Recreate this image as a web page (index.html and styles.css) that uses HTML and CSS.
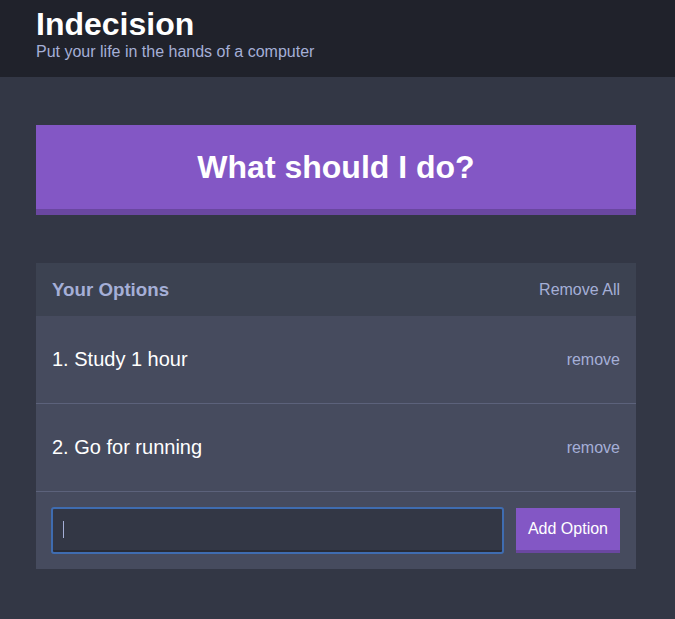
FILE: index.html
```html
<!DOCTYPE html>
<html>
<head>
<meta charset="utf-8">
<title>Indecision</title>
<link rel="stylesheet" href="styles.css">
</head>
<body>
<header class="header">
  <div class="container">
    <h1 class="header__title">Indecision</h1>
    <h2 class="header__subtitle">Put your life in the hands of a computer</h2>
  </div>
</header>
<main class="container">
  <button class="big-button">What should I do?</button>
  <section class="widget">
    <div class="widget-header">
      <h3 class="widget-header__title">Your Options</h3>
      <button class="button--link">Remove All</button>
    </div>
    <div class="option">
      <p class="option__text">1. Study 1 hour</p>
      <button class="button--link">remove</button>
    </div>
    <div class="option">
      <p class="option__text">2. Go for running</p>
      <button class="button--link">remove</button>
    </div>
    <form class="add-option">
      <div class="add-option__field">
        <input class="add-option__input" type="text" name="option">
        <span class="add-option__caret"></span>
      </div>
      <button class="button" type="button">Add Option</button>
    </form>
  </section>
</main>
</body>
</html>
```
FILE: styles.css
```css
* { box-sizing: border-box; }
html, body { margin: 0; padding: 0; }
body {
  background: #333745;
  font-family: "Liberation Sans", Helvetica, Arial, sans-serif;
  font-size: 16px;
  color: #fff;
  height: 619px;
  overflow: hidden;
}
.container {
  width: 600px;
  margin: 0 36px;
}
.header {
  background: #20222b;
  padding: 7px 0 15px;
  margin-bottom: 48px;
}
.header__title {
  margin: 0;
  font-size: 32px;
  line-height: 35px;
  font-weight: bold;
  color: #fff;
}
.header__subtitle {
  margin: 0;
  font-size: 16px;
  line-height: 20px;
  font-weight: normal;
  color: #a5afd7;
}
.big-button {
  display: block;
  width: 100%;
  background: #8357c5;
  border: none;
  border-bottom: 6px solid #6a47a0;
  color: #fff;
  font-family: inherit;
  font-weight: bold;
  font-size: 32px;
  line-height: 36px;
  padding: 24px;
  margin: 0 0 48px;
  cursor: pointer;
}
.widget {
  background: #464b5e;
}
.widget-header {
  background: #3c4251;
  color: #a5afd7;
  display: flex;
  justify-content: space-between;
  align-items: center;
  padding: 16px;
}
.widget-header__title {
  margin: 0;
  font-size: 18.72px;
  line-height: 21px;
  font-weight: bold;
}
.button--link {
  background: none;
  border: none;
  color: #a5afd7;
  padding: 0;
  font-family: inherit;
  font-size: 16px;
  cursor: pointer;
}
.option {
  display: flex;
  justify-content: space-between;
  align-items: center;
  padding: 16px;
  border-bottom: 1px solid #5c627b;
}
.option__text {
  margin: 16px 0;
  font-size: 20px;
  line-height: 23px;
  color: #fff;
}
.add-option {
  display: flex;
  padding: 16px;
  margin: 0;
}
.add-option__field {
  position: relative;
  flex-grow: 1;
  display: flex;
  margin-right: 13px;
}
.add-option__input {
  flex-grow: 1;
  background: #333745;
  border: none;
  border-bottom: 3px solid #282b36;
  color: #a5afd7;
  padding: 8px;
  font-family: inherit;
  font-size: 16px;
  outline: 2px solid #3f6cb0;
  outline-offset: -1px;
  border-radius: 2px;
}
.add-option__caret {
  position: absolute;
  left: 11px;
  top: 13px;
  width: 1px;
  height: 17px;
  background: #a5afd7;
}
.button {
  background: #8357c5;
  border: none;
  border-bottom: 3px solid #6a47a0;
  color: #fff;
  font-family: inherit;
  font-size: 16px;
  padding: 12px;
  line-height: 18px;
  cursor: pointer;
}
```
